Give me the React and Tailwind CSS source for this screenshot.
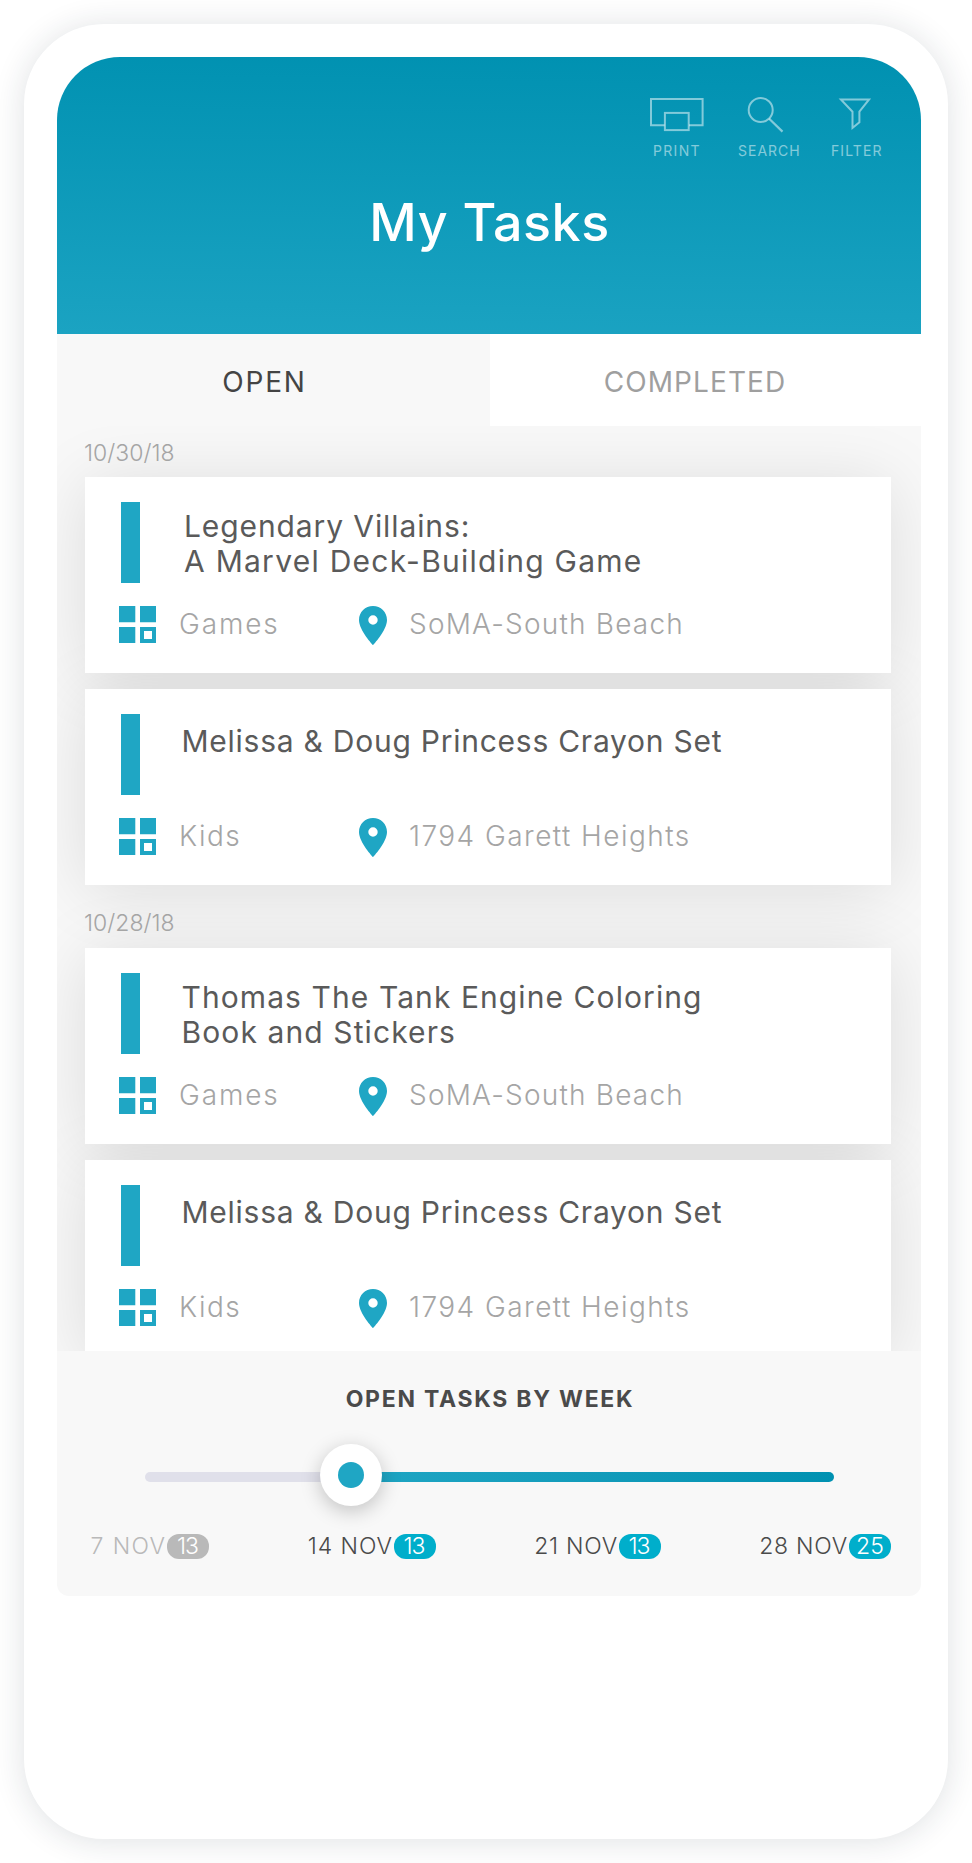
import clsx from 'clsx';

const groups = [
  {
    date: '10/30/18',
    tasks: [
      {
        id: 1,
        lines: [
          { text: 'Legendary Villains:', tracking: 'tracking-[0.9px]' },
          { text: 'A Marvel Deck-Building Game', tracking: 'tracking-[1.26px]' },
        ],
        indent: 'pl-[44px]',
        category: 'Games',
        place: 'SoMA-South Beach',
      },
      {
        id: 2,
        lines: [{ text: 'Melissa & Doug Princess Crayon Set', tracking: 'tracking-[0.75px]' }],
        indent: 'pl-[41.5px]',
        category: 'Kids',
        place: '1794 Garett Heights',
      },
    ],
  },
  {
    date: '10/28/18',
    tasks: [
      {
        id: 3,
        lines: [
          { text: 'Thomas The Tank Engine Coloring', tracking: 'tracking-[1.08px]' },
          { text: 'Book and Stickers', tracking: 'tracking-[1.1px]' },
        ],
        indent: 'pl-[41.5px]',
        category: 'Games',
        place: 'SoMA-South Beach',
      },
      {
        id: 4,
        lines: [{ text: 'Melissa & Doug Princess Crayon Set', tracking: 'tracking-[0.75px]' }],
        indent: 'pl-[41.5px]',
        category: 'Kids',
        place: '1794 Garett Heights',
      },
    ],
  },
];

const weeks = [
  { label: '7 NOV', count: 13, tracking: 'tracking-[1.4px]', past: true },
  { label: '14 NOV', count: 13, tracking: 'tracking-[0.95px]' },
  { label: '21 NOV', count: 13, tracking: 'tracking-[0.75px]' },
  { label: '28 NOV', count: 25, tracking: 'tracking-[0.75px]' },
];

function PrintIcon() {
  return (
    <svg width="56" height="36" viewBox="0 0 56 36" fill="none" stroke="currentColor" strokeWidth="2">
      <path d="M14.5 28.2H1V2h51.6v26.2H39" />
      <rect x="14.9" y="15.9" width="23.8" height="17.2" />
    </svg>
  );
}

function SearchIcon() {
  return (
    <svg width="63" height="36" viewBox="0 0 63 36" fill="none" stroke="currentColor" strokeWidth="2">
      <circle cx="22.7" cy="13" r="12" />
      <path d="M31.2 21.7 44.5 34.6" strokeWidth="2.2" />
    </svg>
  );
}

function FilterIcon() {
  return (
    <svg width="52" height="36" viewBox="0 0 52 36" fill="none" stroke="currentColor" strokeWidth="2">
      <path d="M9.9 2.4h28.2L28.4 14.7v10.6L21.5 31V14.7z" />
    </svg>
  );
}

function CategoryIcon() {
  return (
    <svg width="37" height="37" viewBox="0 0 37 37" fill="#1fa6c4" className="shrink-0">
      <path d="M0 0h16.3v16.3H0zM21 0h16v16.3H21zM0 21h16.3v16H0z" />
      <path fillRule="evenodd" d="M21 21h16v16H21zM25 25v8h8v-8z" />
    </svg>
  );
}

function PinIcon() {
  return (
    <svg width="28" height="39" viewBox="0 0 28 39" fill="#1fa6c4" className="shrink-0">
      <path
        fillRule="evenodd"
        d="M14 0C6.2 0 0 6.2 0 13.9 0 24.2 14 39 14 39s14-14.8 14-25.1C28 6.2 21.8 0 14 0zm0 9.3a4.7 4.7 0 1 1 0 9.4 4.7 4.7 0 0 1 0-9.4z"
      />
    </svg>
  );
}

function HeaderAction({ icon, label, className }) {
  return (
    <button className="flex flex-col text-white/50">
      {icon}
      <span className={clsx('mt-[10px] text-[14px] leading-4 whitespace-nowrap', className)}>{label}</span>
    </button>
  );
}

function TaskCard({ task }) {
  return (
    <div className="relative h-[196px] shrink-0 bg-white pt-[25px]">
      {/* sits under every card so that neighbours stay white */}
      <div className="absolute inset-0 -z-10 shadow-[0_6px_64px_rgba(0,0,0,0.115)]"></div>
      <div className="flex pl-9">
        <div className="h-[81px] w-[19px] shrink-0 bg-[#1fa6c4]"></div>
        <div
          className={clsx(
            'text-[30px] leading-[34.6px] font-normal whitespace-nowrap text-[#5a5a5a]',
            task.indent,
            task.lines.length > 1 ? 'pt-[7px]' : 'pt-[10px]'
          )}
        >
          {task.lines.map((line) => (
            <p key={line.text} className={line.tracking}>{line.text}</p>
          ))}
        </div>
      </div>
      <div className="mt-[23px] flex pl-[34px] text-[28px] leading-[37px] font-light whitespace-nowrap text-[#a5a5a5]">
        <CategoryIcon />
        <span className={clsx('ml-[23px] w-[179.5px]', task.category === 'Kids' ? 'tracking-[1.4px]' : 'tracking-[1.85px]')}>
          {task.category}
        </span>
        <PinIcon />
        <span className={clsx('ml-[22.5px]', task.id % 2 ? 'tracking-[1.2px]' : 'tracking-[1.45px]')}>{task.place}</span>
      </div>
    </div>
  );
}

export default function App() {
  return (
    <div className="h-[1863px] w-[972px] overflow-hidden bg-white p-6 font-[Inter,sans-serif]">
      <div className="h-[1815px] w-[924px] rounded-[80px] bg-white px-[33px] pt-[33px] shadow-[0_2px_32px_rgba(30,40,55,0.14)]">
        <div className="flex w-[864px] flex-col">
          <header className="h-[277px] rounded-t-[63px] bg-linear-[181deg,#0091b1,#1ba3c2] pt-10">
            <div className="flex justify-end pr-[38px]">
              <HeaderAction icon={<PrintIcon />} label="PRINT" className="pl-[3px] text-left tracking-[1.31px]" />
              <div className="ml-8">
                <HeaderAction icon={<SearchIcon />} label="SEARCH" className="text-left tracking-[1px]" />
              </div>
              <div className="ml-[30px]">
                <HeaderAction icon={<FilterIcon />} label="FILTER" className="text-left tracking-[1.09px]" />
              </div>
            </div>
            <h1 className="mt-[34px] pl-px text-center text-[52px] leading-[60px] font-medium tracking-[0.5px] text-white">
              My Tasks
            </h1>
          </header>

          <div className="flex h-[92px] text-[28px] leading-[96px] font-normal">
            <button className="w-[433px] bg-[#f8f8f8] pr-[18px] tracking-[1.8px] text-[#444444]">OPEN</button>
            <button className="flex-1 bg-white pr-[21px] tracking-[1.1px] text-[#9f9f9f]">COMPLETED</button>
          </div>

          <main className="isolate flex h-[925px] flex-col overflow-hidden bg-[#f8f8f8] pr-[30px] pl-7">
            {groups.map((group, i) => (
              <section key={group.date} className="shrink-0">
                <div
                  className={clsx(
                    'pr-1 text-[23px] font-light text-[#a5a5a5]',
                    i === 0 ? 'h-[51px] leading-[54px]' : 'h-[63px] leading-[77px]'
                  )}
                >
                  <span className="-ml-px">{group.date}</span>
                </div>
                <div className="flex flex-col gap-4">
                  {group.tasks.map((task) => (
                    <TaskCard key={task.id} task={task} />
                  ))}
                </div>
              </section>
            ))}
          </main>

          <footer className="h-[245px] rounded-b-xl bg-[#f8f8f8] pt-[33px]">
            <h2 className="pl-[2px] text-center text-[23px] leading-[30px] font-bold tracking-[1.74px] text-[#4a4a4a]">
              OPEN TASKS BY WEEK
            </h2>
            <div className="relative mt-[58px] mr-[87px] ml-[88px] flex h-[10px]">
              <div className="w-[205px] rounded-l-full bg-[#e0e0ea]"></div>
              <div className="flex-1 rounded-r-full bg-linear-to-r from-[#1fa6c4] to-[#0091b1]"></div>
              <div className="absolute top-[-28px] left-[174.5px] flex size-[62px] items-center justify-center rounded-full bg-white shadow-[0_5px_20px_rgba(0,0,0,0.22)]">
                <div className="size-[26px] rounded-full bg-[#1fa6c4]"></div>
              </div>
            </div>
            <div className="mt-[52px] flex justify-between pr-[30px] pl-[33.5px] text-[23px] leading-[25px] font-light">
              {weeks.map((week) => (
                <div key={week.label} className={clsx('flex', week.past ? 'text-[#b9b9b9]' : 'text-[#4a4a4a]')}>
                  <span className={week.tracking}>{week.label}</span>
                  <span
                    className={clsx(
                      'ml-px h-[25px] w-[42px] rounded-xl text-center text-white',
                      week.past ? 'bg-[#b9b9b9]' : 'bg-[#00aecb]',
                      week.count === 13 && 'pr-[2px] tracking-[-1px]'
                    )}
                  >
                    {week.count}
                  </span>
                </div>
              ))}
            </div>
          </footer>
        </div>
      </div>
    </div>
  );
}
